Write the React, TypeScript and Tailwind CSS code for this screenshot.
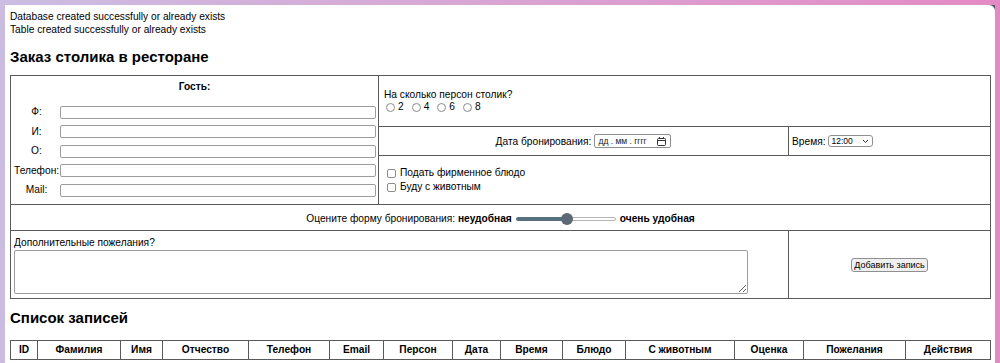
import React from "react";

const fio = ["Ф", "И", "О", "Телефон", "Mail"];
const persons = ["2", "4", "6", "8"];
const columns: [string, string][] = [
  ["ID", "w-[27px]"],
  ["Фамилия", "w-[83px]"],
  ["Имя", "w-[42px]"],
  ["Отчество", "w-[86px]"],
  ["Телефон", "w-[81px]"],
  ["Email", "w-[54px]"],
  ["Персон", "w-[69px]"],
  ["Дата", "w-[48px]"],
  ["Время", "w-[62px]"],
  ["Блюдо", "w-[63px]"],
  ["С животным", "w-[109px]"],
  ["Оценка", "w-[69px]"],
  ["Пожелания", "w-[102px]"],
  ["Действия", "w-[85px]"],
];

const cell = "border border-[#5a5a5a] p-0";

function CalendarIcon() {
  return (
    <svg width="9" height="9" viewBox="0 0 9 9" fill="none" stroke="#333" strokeWidth="1">
      <rect x="0.5" y="1.5" width="8" height="7" rx="1" />
      <line x1="0.5" y1="3.5" x2="8.5" y2="3.5" />
      <line x1="2.5" y1="0" x2="2.5" y2="2" />
      <line x1="6.5" y1="0" x2="6.5" y2="2" />
    </svg>
  );
}

function Slider() {
  // range input drawn as a track with the thumb in the middle
  return (
    <span className="relative mx-[4px] flex h-[12px] w-[100px] items-center">
      <span className="h-[4px] w-[50px] rounded-l-full bg-[#56707e]" />
      <span className="h-[4px] w-[50px] rounded-r-full border border-[#b5b5b5] bg-white" />
      <span className="absolute left-[45px] top-0 h-[12px] w-[12px] rounded-full bg-[#5e6975]" />
    </span>
  );
}

export default function App() {
  return (
    <div className="relative h-[363px] overflow-hidden bg-linear-to-r from-[#cbbde2] to-[#e38ac6] px-[5px] pt-[5px] font-['Liberation_Sans',Arial,sans-serif] text-[10.2px] text-black">
      <div className="absolute right-[5px] top-[5px] h-[6px] w-[6px] bg-[#4e5a66]" />
      <div className="relative h-[400px] rounded-tr-[6px] bg-white px-[5px] pt-[5px]">
        <div className="leading-[13px]">
          <div>Database created successfully or already exists</div>
          <div>Table created successfully or already exists</div>
        </div>

        <h2 className="mt-[12px] text-[15px] font-bold leading-[18px]">Заказ столика в ресторане</h2>

        <form className="mt-[9px]">
          <table className="w-[980px] table-fixed border-collapse border border-[#5a5a5a]">
            <colgroup>
              <col className="w-[368px]" />
              <col className="w-[410px]" />
              <col className="w-[202px]" />
            </colgroup>
            <tbody>
              <tr className="h-[51px]">
                <td rowSpan={3} className={`${cell} align-middle`}>
                  <div className="text-center font-bold leading-[13px]">Гость:</div>
                  <div className="mt-[9px] flex flex-col pl-[3px]">
                    {fio.map((f) => (
                      <div key={f} className="flex h-[19.5px] items-center">
                        <span className="w-[45px] text-center">{f}:</span>
                        <input className="ml-[1px] h-[13px] w-[316px] rounded-[2px] border border-[#9c9c9c] bg-white" />
                      </div>
                    ))}
                  </div>
                </td>
                <td colSpan={2} className={`${cell} px-[5px] leading-[12px]`}>
                  <div>На сколько персон столик?</div>
                  <div className="flex items-center">
                    {persons.map((p) => (
                      <label key={p} className="mr-[6px] flex items-center gap-[3px]">
                        <input
                          type="radio"
                          name="persons"
                          className="ml-[2px] h-[9px] w-[9px] appearance-none rounded-full border border-[#8c8c8c] bg-white"
                        />
                        {p}
                      </label>
                    ))}
                  </div>
                </td>
              </tr>
              <tr className="h-[29px]">
                <td className={`${cell} text-center`}>
                  <span className="inline-flex items-center gap-[3px] align-middle">
                    Дата бронирования:
                    <span className="flex h-[14px] w-[77px] items-center justify-between rounded-[2px] border border-[#8f8f8f] pl-[3px] pr-[4px] text-[8.5px] text-[#222]">
                      дд . мм . гггг
                      <CalendarIcon />
                    </span>
                  </span>
                </td>
                <td className={`${cell} px-[3px]`}>
                  <span className="inline-flex items-center gap-[3px] align-middle">
                    Время:
                    <span className="flex h-[12px] w-[45px] items-center justify-between rounded-[3px] border border-[#8f8f8f] pl-[2px] pr-[3px] text-[8.5px]">
                      12:00
                      <svg width="7" height="5" viewBox="0 0 7 5" fill="none" stroke="#333" strokeWidth="1">
                        <polyline points="1,1 3.5,3.5 6,1" />
                      </svg>
                    </span>
                  </span>
                </td>
              </tr>
              <tr className="h-[49px]">
                <td colSpan={2} className={`${cell} px-[5px] leading-[14px]`}>
                  {["Подать фирменное блюдо", "Буду с животным"].map((t) => (
                    <label key={t} className="flex items-center gap-[4px]">
                      <input
                        type="checkbox"
                        className="ml-[3px] h-[9px] w-[9px] appearance-none rounded-[2px] border border-[#8c8c8c] bg-white"
                      />
                      {t}
                    </label>
                  ))}
                </td>
              </tr>
              <tr className="h-[26px]">
                <td colSpan={3} className={`${cell} pt-[2px] text-center`}>
                  <span className="inline-flex items-center align-middle">
                    Оцените форму бронирования:&nbsp;<b>неудобная</b>
                    <Slider />
                    <b>очень удобная</b>
                  </span>
                </td>
              </tr>
              <tr className="h-[68px]">
                <td colSpan={2} className={`${cell} px-[3px] align-middle`}>
                  <div className="leading-[13px]">Дополнительные пожелания?</div>
                  <textarea className="mt-[1px] block h-[44px] w-[734px] rounded-[2px] border border-[#9c9c9c]" />
                </td>
                <td className={`${cell} text-center`}>
                  <button
                    type="button"
                    className="h-[14px] rounded-[3px] border border-[#8f8f8f] bg-[#efefef] px-[2px] text-[9px] leading-[12px]"
                  >
                    Добавить запись
                  </button>
                </td>
              </tr>
            </tbody>
          </table>
        </form>

        <h2 className="mt-[10px] text-[15px] font-bold leading-[18px]">Список записей</h2>

        <table className="mt-[13px] w-[980px] table-fixed border-collapse border border-[#5a5a5a]">
          <colgroup>
            {columns.map(([c, w]) => (
              <col key={c} className={w} />
            ))}
          </colgroup>
          <thead>
            <tr className="h-[19px]">
              {columns.map(([c]) => (
                <th key={c} className="border border-[#5a5a5a] p-0 text-center font-bold">
                  {c}
                </th>
              ))}
            </tr>
          </thead>
        </table>
      </div>
    </div>
  );
}
